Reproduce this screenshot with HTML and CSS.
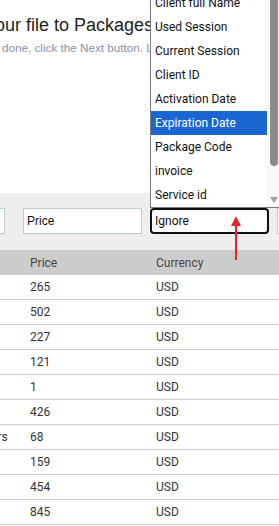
FILE: index.html
```html
<!DOCTYPE html>
<html lang="en">
<head>
    <title>Import Packages</title>
    <link rel="stylesheet" href="styles.css">
</head>
<body>
    <div class="intro">
        <h2 class="title">Upload your file to Packages</h2>
        <p class="subtitle">done, click the Next button. Leave unmatched columns as Ignore.</p>
    </div>
    <div class="mapping">
        <div class="map-field first">Name</div>
        <div class="map-field">Price</div>
        <div class="map-select">Ignore</div>
        <div class="map-field">Currency</div>
    </div>
    <table class="grid">
        <colgroup>
            <col class="col-name">
            <col class="col-price">
            <col class="col-currency">
        </colgroup>
        <thead>
            <tr>
                <th>Name</th>
                <th>Price</th>
                <th>Currency</th>
            </tr>
        </thead>
        <tbody>
            <tr><td>Basic</td><td>265</td><td>USD</td></tr>
            <tr><td>Silver</td><td>502</td><td>USD</td></tr>
            <tr><td>Gold</td><td>227</td><td>USD</td></tr>
            <tr><td>Trial</td><td>121</td><td>USD</td></tr>
            <tr><td>Test</td><td>1</td><td>USD</td></tr>
            <tr><td>Family</td><td>426</td><td>USD</td></tr>
            <tr><td>Resellers</td><td>68</td><td>USD</td></tr>
            <tr><td>Pro</td><td>159</td><td>USD</td></tr>
            <tr><td>Office</td><td>454</td><td>USD</td></tr>
            <tr><td>Hotel</td><td>845</td><td>USD</td></tr>
        </tbody>
    </table>

    <!-- open list of the focused column select -->
    <div class="menu">
        <ul class="menu-list">
            <li>Client full Name</li>
            <li>Used Session</li>
            <li>Current Session</li>
            <li>Client ID</li>
            <li>Activation Date</li>
            <li class="active">Expiration Date</li>
            <li>Package Code</li>
            <li>invoice</li>
            <li>Service id</li>
        </ul>
        <div class="menu-scroll">
            <div class="thumb"></div>
            <div class="down"></div>
        </div>
    </div>

    <svg class="pointer" width="12" height="48" viewBox="0 0 12 48">
        <line x1="6" y1="11" x2="6" y2="46" stroke="#e0282c" stroke-width="2"/>
        <polygon points="1,12 6,2 11,12" fill="#e0282c"/>
    </svg>
</body>
</html>
```

FILE: styles.css
```css
body {
    font-family: Arial, "Liberation Sans", sans-serif;
    margin: 0;
    padding: 0;
    width: 279px;
    height: 526px;
    overflow: hidden;
    position: relative;
    background: #fff;
}

.intro {
    height: 193px;
    padding-top: 14px;
    box-sizing: border-box;
}

.title {
    margin: 0 0 4px -76px;
    font-size: 18px;
    line-height: 22px;
    font-weight: normal;
    color: #222;
    white-space: nowrap;
}

.subtitle {
    margin: 0 0 0 2px;
    font-size: 11.7px;
    line-height: 16px;
    color: #8a90a6;
    white-space: nowrap;
}

.mapping {
    background-color: #eee;
    height: 57px;
    padding-top: 15px;
    box-sizing: border-box;
    margin-left: -114px;
    display: flex;
    gap: 8px;
}

.map-field {
    flex: none;
    width: 119px;
    height: 26px;
    box-sizing: border-box;
    border: 1px solid #b9cdd6;
    background: #fff;
    padding-left: 3px;
    display: flex;
    align-items: center;
    font-size: 12px;
    color: #111;
}

.map-field.first {
    margin-right: 10px;
}

.map-select {
    flex: none;
    width: 119px;
    height: 26px;
    box-sizing: border-box;
    border: 2px solid #111;
    border-radius: 4px;
    background: #fff;
    padding-left: 3px;
    display: flex;
    align-items: center;
    font-family: Roboto, sans-serif;
    font-size: 12px;
    color: #111;
}

.grid {
    border-collapse: collapse;
    table-layout: fixed;
    width: 520px;
    margin-left: -49px;
    font-family: Roboto, sans-serif;
    font-size: 12px;
    color: #333;
}

.col-name {
    width: 71px;
}

.col-price {
    width: 126px;
}

.grid th {
    background-color: #ccc;
    height: 25px;
    padding: 0 8px;
    text-align: left;
    font-weight: normal;
    color: #444;
}

.grid td {
    height: 24px;
    padding: 0 8px;
    border-bottom: 1px solid #ccc;
    white-space: nowrap;
}

.menu {
    position: absolute;
    left: 150px;
    top: -10px;
    display: flex;
    border: 1px solid #7a7a7a;
    background: #fff;
}

.menu-list {
    list-style-type: none;
    margin: 0;
    padding: 0;
    width: 116px;
    font-family: Roboto, sans-serif;
    font-size: 12px;
    color: #111;
}

.menu-list li {
    height: 24px;
    line-height: 24px;
    padding-left: 4px;
    white-space: nowrap;
}

.menu-list li.active {
    background-color: #1b66d2;
    color: #fff;
}

.menu-scroll {
    position: relative;
    width: 14px;
    background: #f8f8f8;
}

.thumb {
    position: absolute;
    left: 3px;
    top: 0;
    width: 8px;
    height: 175px;
    border-radius: 0 0 4px 4px;
    background: #8b8b8b;
}

.down {
    position: absolute;
    left: 3px;
    top: 206px;
    width: 0;
    height: 0;
    border-left: 4px solid transparent;
    border-right: 4px solid transparent;
    border-top: 6px solid #a3a3a3;
}

.pointer {
    position: absolute;
    left: 230px;
    top: 214px;
}
```
